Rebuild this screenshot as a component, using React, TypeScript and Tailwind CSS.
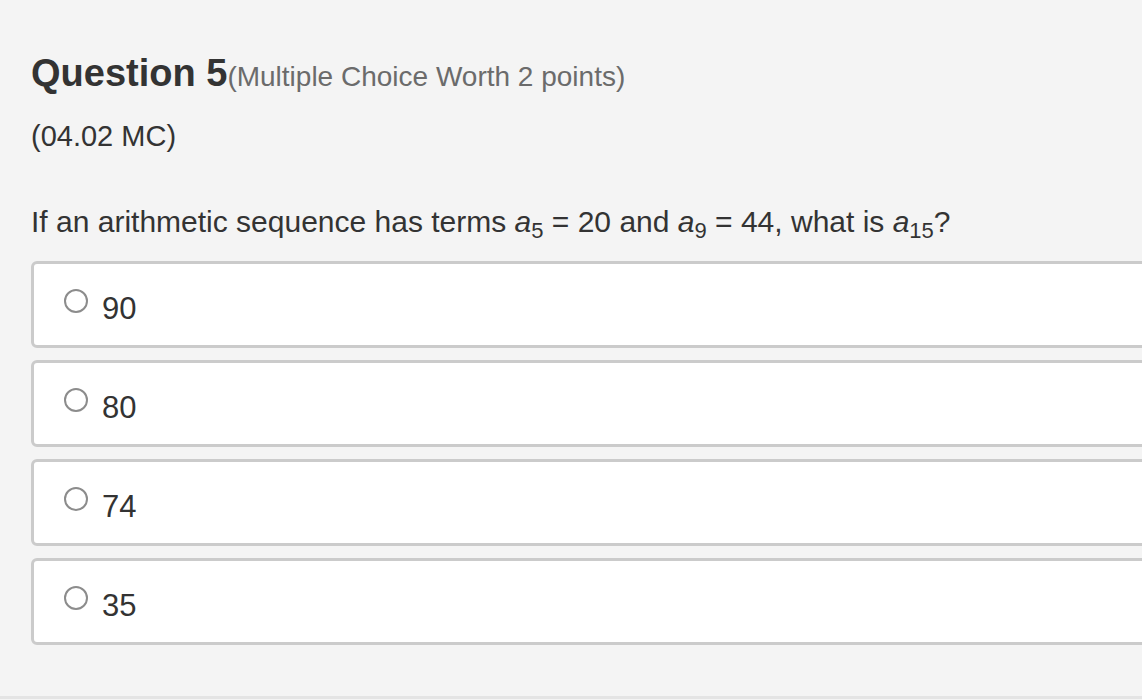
import { ReactNode } from "react";

type Choice = {
    id: string;
    label: string;
}

const choices: Choice[] = [
    { id: "a", label: "90" },
    { id: "b", label: "80" },
    { id: "c", label: "74" },
    { id: "d", label: "35" },
];

// italic term with a lowered index, e.g. a₅
const Term = ({ sub }: { sub: ReactNode }) => {
    return (
        <span className="whitespace-nowrap">
            <span className="italic">a</span>
            <span className="relative top-[6px] text-[22px] leading-none">{sub}</span>
        </span>
    );
}

const ChoiceRow = ({ label }: { label: string }) => {
    return (
        <label className="flex h-[87px] w-[1130px] shrink-0 cursor-pointer items-center rounded-[6px] border-[3px] border-[#cbcbcb] bg-white pl-[30px]">
            <span className="-mt-[7px] h-[24px] w-[24px] shrink-0 rounded-full border-[2.5px] border-[#8c8c8c] bg-white" />
            <span className="ml-[14px] mt-[8px] text-[31px] leading-[36px] text-[#333333]">{label}</span>
        </label>
    );
}

export default function App() {
    return (
        <div className="flex h-[700px] w-full flex-col overflow-hidden bg-[#f4f4f4] font-['Liberation_Sans',Arial,sans-serif]">
            <div className="flex flex-1 flex-col pl-[31px] pt-[51px]">
                <h2 className="whitespace-nowrap text-[38px] font-bold leading-[44px] text-[#333333]">
                    Question 5<span className="text-[28px] font-normal text-[#6b6b6b]">(Multiple Choice Worth 2 points)</span>
                </h2>
                <p className="mt-[19px] text-[29px] leading-[36px] text-[#333333]">(04.02 MC)</p>
                <p className="mt-[50px] whitespace-nowrap text-[30px] leading-[36px] text-[#333333]">
                    If an arithmetic sequence has terms <Term sub="5" /> = 20 and <Term sub="9" /> = 44, what is <Term sub="15" />?
                </p>
                <div className="mt-[21px] flex flex-col gap-[12px]">
                    {choices.map((c) => (
                        <ChoiceRow key={c.id} label={c.label} />
                    ))}
                </div>
            </div>
            <div className="mb-[1px] h-[3px] w-full bg-[#e4e4e4]" />
        </div>
    );
}
